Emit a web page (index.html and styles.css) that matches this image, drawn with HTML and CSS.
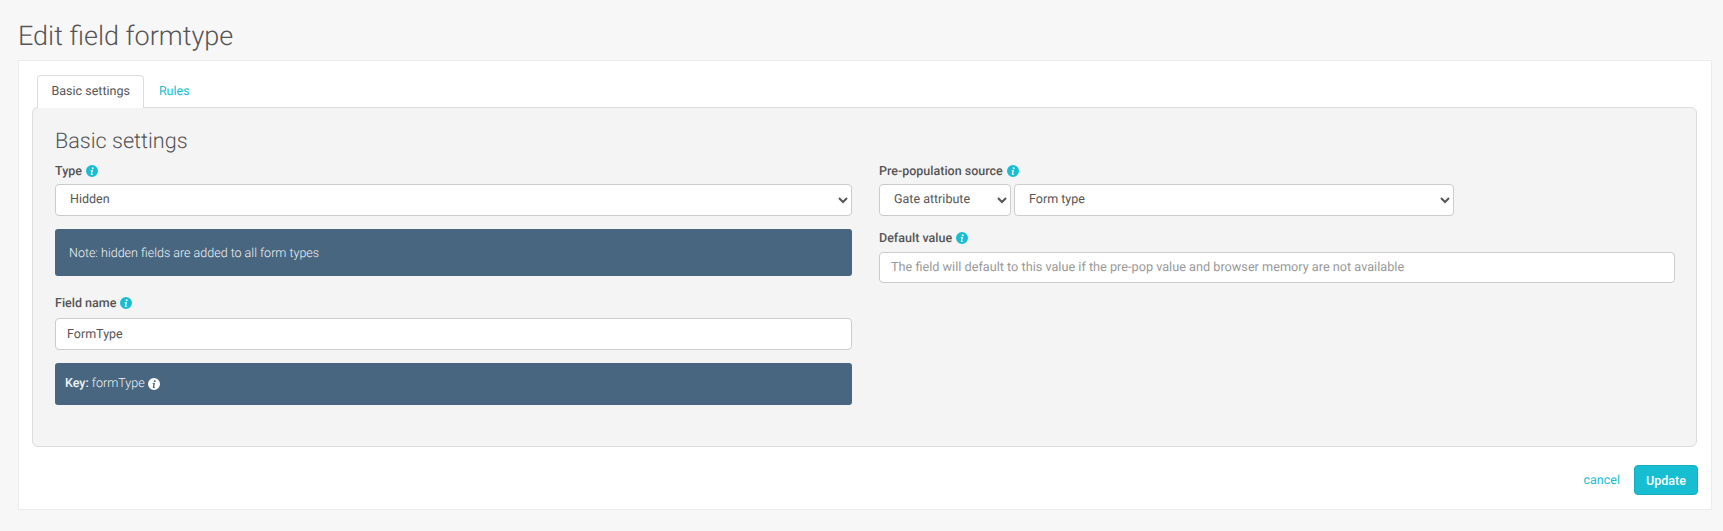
FILE: index.html
```html
<!DOCTYPE html>
<html lang="en">
<head>
    <meta charset="UTF-8">
    <meta name="viewport" content="width=device-width, initial-scale=1.0">
    <title>Edit field formtype</title>
    <link rel="stylesheet" href="styles.css">
</head>
<body>

    <h1 class="page-title">Edit field formtype</h1>

    <div class="card">
        <nav class="tabs">
            <a href="#" class="tab active">Basic settings</a>
            <a href="#" class="tab">Rules</a>
        </nav>

        <div class="panel">
            <h2 class="panel-title">Basic settings</h2>
            <div class="columns">
                <div class="column">
                    <label class="field-label">Type
                        <svg class="info" viewBox="0 0 12 12"><use href="#info-icon"/></svg>
                    </label>
                    <select class="control">
                        <option>Hidden</option>
                    </select>
                    <div class="notice notice-note">Note: hidden fields are added to all form types</div>

                    <label class="field-label field-name">Field name
                        <svg class="info" viewBox="0 0 12 12"><use href="#info-icon"/></svg>
                    </label>
                    <input class="control text-input" type="text" value="FormType">
                    <div class="notice notice-key">
                        <span><b>Key:</b> formType</span>
                        <svg class="info info-white" viewBox="0 0 12 12"><use href="#info-icon"/></svg>
                    </div>
                </div>

                <div class="column">
                    <label class="field-label">Pre-population source
                        <svg class="info" viewBox="0 0 12 12"><use href="#info-icon"/></svg>
                    </label>
                    <div class="select-row">
                        <select class="control source-select">
                            <option>Gate attribute</option>
                        </select>
                        <select class="control attr-select">
                            <option>Form type</option>
                        </select>
                    </div>

                    <label class="field-label default-label">Default value
                        <svg class="info" viewBox="0 0 12 12"><use href="#info-icon"/></svg>
                    </label>
                    <input class="control text-input default-input" type="text" placeholder="The field will default to this value if the pre-pop value and browser memory are not available">
                </div>
            </div>
        </div>

        <div class="actions">
            <a href="#" class="cancel">cancel</a>
            <button class="btn">Update</button>
        </div>
    </div>

    <svg class="icon-defs" width="0" height="0">
        <symbol id="info-icon" viewBox="0 0 12 12">
            <path fill-rule="evenodd" d="M6 0a6 6 0 1 1 0 12A6 6 0 0 1 6 0zM6.7 2.2a1 1 0 1 0 0 2 1 1 0 0 0 0-2zM4.6 5.1v.6l.8.1-.6 3.1c-.1.7.3 1 .9 1 .6 0 1.2-.3 1.6-.7l-.1-.5c-.2.1-.5.2-.7.2-.2 0-.3-.1-.2-.4l.7-3.6z"/>
        </symbol>
    </svg>

</body>
</html>
```

FILE: styles.css
```css
/* General Styling */
* {
    box-sizing: border-box;
}

body {
    font-family: 'Roboto', sans-serif;
    font-size: 12.5px;
    text-rendering: geometricPrecision;
    margin: 0;
    padding: 0 11px 21px 18px;
    background-color: #f7f7f7;
    color: #555;
}

.page-title {
    font-size: 27px;
    font-weight: 300;
    line-height: 32px;
    margin: 0;
    padding: 20px 0 8px;
    color: #555;
}

/* Card */
.card {
    height: 450px;
    padding: 14px 14px 0 13px;
    background: white;
    border: 1px solid #ececec;
}

/* Tabs */
.tabs {
    display: flex;
    padding-left: 5px;
    height: 32px;
}

.tab {
    height: 33px;
    padding: 0 13.5px;
    margin-right: 1px;
    line-height: 33px;
    color: #17bed2;
    text-decoration: none;
    position: relative;
    z-index: 1;
}

.tab.active {
    line-height: 31px;
    color: #555;
    background: white;
    border: 1px solid #ddd;
    border-bottom: none;
    border-radius: 4px 4px 0 0;
}

/* Panel */
.panel {
    height: 340px;
    padding: 21px 21px 0 22px;
    background: #f4f4f4;
    border: 1px solid #ddd;
    border-radius: 6px;
}

.panel-title {
    font-size: 21.6px;
    font-weight: 300;
    line-height: 26px;
    margin: 0 0 8px;
    color: #555;
}

.columns {
    display: grid;
    grid-template-columns: 797px 796px;
    column-gap: 27px;
}

.field-label {
    display: flex;
    align-items: center;
    gap: 4px;
    height: 16px;
    margin-bottom: 5px;
    font-size: 12.5px;
    font-weight: 500;
    color: #555;
}

.info {
    width: 12px;
    height: 12px;
    fill: #17bed2;
}

.info-white {
    fill: white;
}

.icon-defs {
    display: block;
}

/* Form controls */
.control {
    display: block;
    width: 100%;
    height: 32px;
    padding: 0 10px 1px;
    font-family: 'Roboto', sans-serif;
    font-size: 12.5px;
    text-rendering: inherit;
    color: #555;
    background: white;
    border: 1px solid #ccc;
    border-radius: 4px;
}

.text-input {
    padding: 0 11px;
}

.text-input::placeholder {
    color: #999;
    opacity: 1;
}

.select-row {
    display: flex;
    gap: 3px;
}

.source-select {
    width: 132px;
}

.attr-select {
    width: 440px;
}

.default-label {
    margin-top: 14px;
    margin-bottom: 6px;
}

.default-input {
    height: 31px;
    font-size: 12.7px;
}

/* Notices */
.notice {
    display: flex;
    align-items: center;
    margin-top: 13px;
    padding: 0 10px;
    background: #48667f;
    color: #eef3f6;
    font-weight: 300;
    border-radius: 3px;
}

.notice-note {
    height: 47px;
    padding: 1px 14px 0;
}

.notice-key {
    height: 42px;
    padding-bottom: 1px;
    gap: 3px;
}

.notice-key b {
    font-weight: 500;
}

.field-name {
    margin-top: 19px;
    margin-bottom: 7px;
}

/* Footer actions */
.actions {
    display: flex;
    justify-content: flex-end;
    align-items: center;
    gap: 14px;
    margin: 18px -1px 0 0;
}

.cancel {
    color: #17bed2;
    text-decoration: none;
}

.btn {
    width: 64px;
    height: 30px;
    font-family: 'Roboto', sans-serif;
    font-size: 12.5px;
    font-weight: 500;
    color: white;
    background: #17bed2;
    border: 1px solid #14aebf;
    border-radius: 4px;
}
```
